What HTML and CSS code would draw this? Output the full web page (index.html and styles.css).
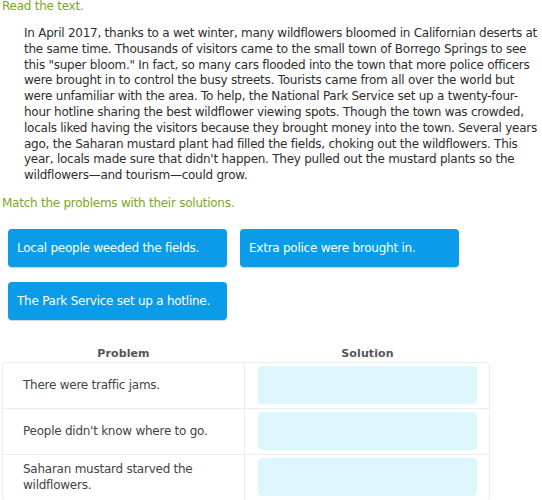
FILE: index.html
```html
<!DOCTYPE html>
<html lang="en">
<head>
<meta charset="utf-8">
<title>Read the text</title>
<link rel="stylesheet" href="styles.css">
</head>
<body>
<div class="prompt prompt-top">Read the text.</div>
<p class="passage">In April 2017, thanks to a wet winter, many wildflowers bloomed in Californian deserts at the same time. Thousands of visitors came to the small town of Borrego Springs to see this "super bloom." In fact, so many cars flooded into the town that more police officers were brought in to control the busy streets. Tourists came from all over the world but were unfamiliar with the area. To help, the National Park Service set up a twenty-four-hour hotline sharing the best wildflower viewing spots. Though the town was crowded, locals liked having the visitors because they brought money into the town. Several years ago, the Saharan mustard plant had filled the fields, choking out the wildflowers. This year, locals made sure that didn't happen. They pulled out the mustard plants so the wildflowers—and tourism—could grow.</p>
<div class="prompt prompt-match">Match the problems with their solutions.</div>
<div class="choices">
  <div class="choice">Local people weeded the fields.</div>
  <div class="choice">Extra police were brought in.</div>
  <div class="choice">The Park Service set up a hotline.</div>
</div>
<div class="table-head">
  <div class="col-title">Problem</div>
  <div class="col-title">Solution</div>
</div>
<div class="match-table">
  <div class="row">
    <div class="problem">There were traffic jams.</div>
    <div class="solution"><div class="drop"></div></div>
  </div>
  <div class="row">
    <div class="problem">People didn't know where to go.</div>
    <div class="solution"><div class="drop"></div></div>
  </div>
  <div class="row last">
    <div class="problem">Saharan mustard starved the wildflowers.</div>
    <div class="solution"><div class="drop"></div></div>
  </div>
</div>
</body>
</html>
```

FILE: styles.css
```css
html, body {
  margin: 0;
  padding: 0;
  background: #ffffff;
}
body {
  font-family: "DejaVu Sans", Verdana, sans-serif;
  font-size: 12px;
  letter-spacing: -0.25px;
  color: #333333;
  width: 542px;
}
.prompt {
  color: #7aa827;
  line-height: 16px;
  padding-left: 2px;
}
.prompt-top {
  line-height: 13px;
}
.passage {
  margin: 13px 2px 0 24px;
  line-height: 15.8px;
  color: #2e2e2e;
}
.prompt-match {
  margin-top: 11px;
}
.choices {
  display: grid;
  grid-template-columns: 219px 219px;
  column-gap: 13px;
  row-gap: 15px;
  margin: 18px 0 0 8px;
}
.choice {
  height: 38px;
  box-sizing: border-box;
  background: #0a9be9;
  color: #ffffff;
  border-radius: 4px;
  padding: 0 9px;
  display: flex;
  align-items: center;
  line-height: 16px;
  box-shadow: 0 1px 1px rgba(0, 0, 0, 0.18);
}
.table-head {
  display: grid;
  grid-template-columns: 243px 245px;
  margin: 26px 0 0 2px;
}
.col-title {
  text-align: center;
  font-weight: bold;
  font-size: 11px;
  letter-spacing: 0.1px;
  line-height: 16px;
  color: #555555;
}
.match-table {
  margin-left: 2px;
  width: 488px;
  box-sizing: border-box;
  border: 1px solid #ededed;
  border-radius: 3px;
}
.row {
  display: grid;
  grid-template-columns: 242px 1fr;
  height: 46px;
  box-sizing: border-box;
  border-bottom: 1px solid #ededed;
}
.row.last {
  border-bottom: none;
  height: 45px;
}
.problem {
  border-right: 1px solid #ededed;
  padding: 0 20px;
  display: flex;
  align-items: center;
  color: #444444;
  line-height: 16.5px;
}
.solution {
  padding: 3px 12px 0 13px;
}
.drop {
  height: 38px;
  background: #dcf6fe;
  border-radius: 4px;
}
```
